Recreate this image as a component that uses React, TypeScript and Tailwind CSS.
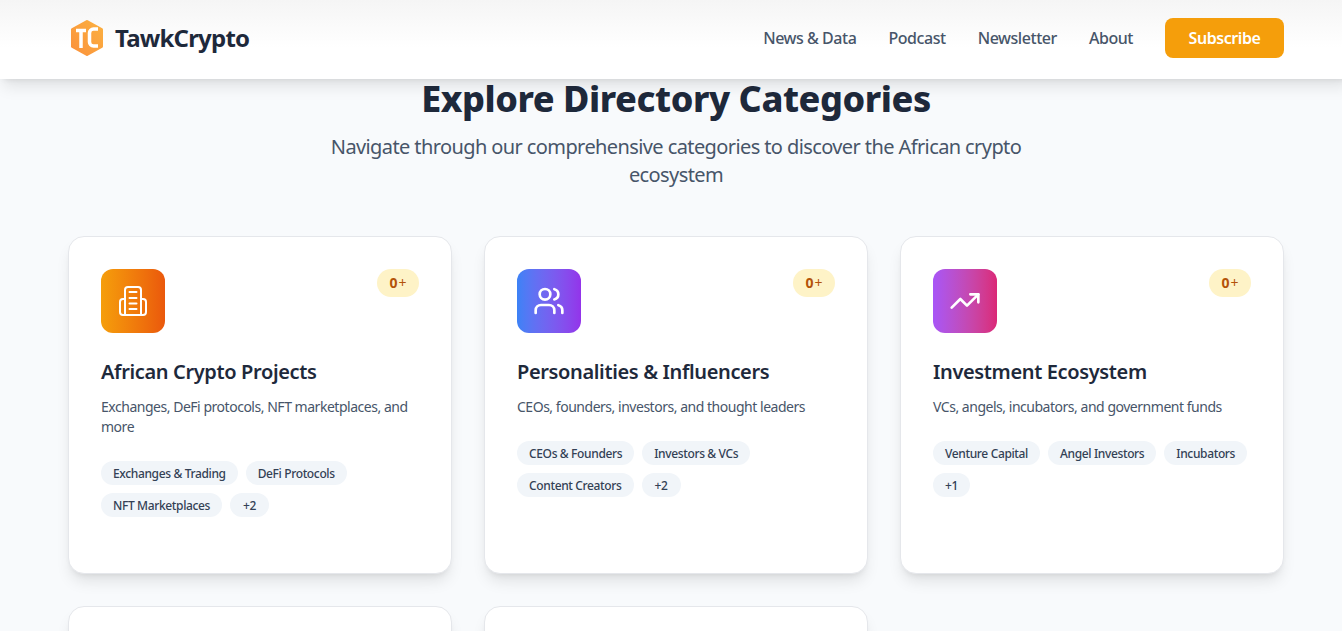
import { TrendingUp, Users } from "lucide-react";
import type { ReactNode } from "react";

type Category = {
  title: string;
  description: string;
  tags: string[];
  gradient: string;
  icon: ReactNode;
};

const BuildingIcon = () => (
  <svg width="32" height="32" viewBox="0 0 32 32" fill="none" stroke="white" strokeWidth="2" strokeLinecap="round" strokeLinejoin="round">
    <path d="M8 30V5a3 3 0 0 1 3-3h10a3 3 0 0 1 3 3v25" />
    <path d="M8 14H6a3 3 0 0 0-3 3v10a3 3 0 0 0 3 3h20a3 3 0 0 0 3-3V17a3 3 0 0 0-3-3h-2" />
    <path d="M12.500 7h7M12.500 13h7M12.500 18.500h7M12.500 24h7" />
  </svg>
);

const categories: Category[] = [
  {
    title: "African Crypto Projects",
    description: "Exchanges, DeFi protocols, NFT marketplaces, and more",
    tags: ["Exchanges & Trading", "DeFi Protocols", "NFT Marketplaces", "+2"],
    gradient: "bg-gradient-to-r from-[#f59e0b] to-[#ea580c]",
    icon: <BuildingIcon />,
  },
  {
    title: "Personalities & Influencers",
    description: "CEOs, founders, investors, and thought leaders",
    tags: ["CEOs & Founders", "Investors & VCs", "Content Creators", "+2"],
    gradient: "bg-gradient-to-r from-[#3b82f6] to-[#9333ea]",
    icon: <Users size={32} color="white" strokeWidth={2} />,
  },
  {
    title: "Investment Ecosystem",
    description: "VCs, angels, incubators, and government funds",
    tags: ["Venture Capital", "Angel Investors", "Incubators", "+1"],
    gradient: "bg-gradient-to-r from-[#a855f7] to-[#db2777]",
    icon: <TrendingUp size={32} color="white" strokeWidth={2} />,
  },
];

function Logo() {
  return (
    <svg width="34" height="38" viewBox="0 0 34 38">
      <defs>
        <linearGradient id="logoFill" x1="0" y1="1" x2="1" y2="0">
          <stop offset="0" stopColor="#fb923c" />
          <stop offset="1" stopColor="#fbb040" />
        </linearGradient>
      </defs>
      <path d="M17 2.500 31.500 10.500V27.500L17 35.500 2.500 27.500V10.500Z" fill="url(#logoFill)" stroke="url(#logoFill)" strokeWidth="3" strokeLinejoin="round" />
      <path d="M6 11.500H16M11 11.500V29" fill="none" stroke="white" strokeWidth="3.500" />
      <path d="M28 10H23.500A4 4 0 0 0 19.500 14V23A4 4 0 0 0 23.500 27H28" fill="none" stroke="white" strokeWidth="3.500" />
    </svg>
  );
}

function CategoryCard({ category }: { category: Category }) {
  return (
    <div className="h-[338px] rounded-2xl border border-[#e5e7eb] bg-white p-8 shadow-lg">
      <div className="flex items-start justify-between">
        <div className={`flex h-16 w-16 items-center justify-center rounded-xl ${category.gradient}`}>
          {category.icon}
        </div>
        <span className="flex h-7 w-[42px] items-center justify-center rounded-full bg-[#fef3c7] text-sm text-[#b45309]">
          <b className="font-bold">0</b>
          <span className="ml-px">+</span>
        </span>
      </div>
      <h3 className="mt-[25px] text-xl leading-7 font-semibold tracking-[-0.018em] text-[#1e293b]">{category.title}</h3>
      <p className="mt-[11px] text-sm leading-5 tracking-[-0.034em] text-[#475569]">{category.description}</p>
      <div className="mt-6 flex flex-wrap gap-2">
        {category.tags.map((tag) => (
          <span
            key={tag}
            className={`flex h-6 items-center justify-center rounded-full bg-[#f1f5f9] px-3 pt-[2px] text-xs font-medium tracking-[-0.03em] text-[#334155] ${tag === "+2" ? "min-w-[39px]" : ""}`}
          >
            {tag}
          </span>
        ))}
      </div>
    </div>
  );
}

export default function App() {
  return (
    <div className="h-[631px] overflow-hidden bg-[#f8fafc] font-['Noto_Sans',sans-serif]">
      <div className="w-[1352px]">
        <header className="relative z-10 h-[79px] bg-gradient-to-b from-[#f5f5f5] to-white to-60% pb-1 shadow-lg">
          <div className="mx-auto flex h-full max-w-7xl items-center justify-between px-8">
            <div className="flex items-center gap-[11px] pl-[2px]">
              <Logo />
              <span className="text-2xl font-bold tracking-[-0.033em] text-[#1e293b]">TawkCrypto</span>
            </div>
            <nav className="flex items-center gap-8 font-medium tracking-[-0.028em] text-[#475569]">
              <a>News &amp; Data</a>
              <a>Podcast</a>
              <a>Newsletter</a>
              <a>About</a>
              <button className="h-10 w-[119px] rounded-lg bg-[#f59e0b] font-semibold text-white">Subscribe</button>
            </nav>
          </div>
        </header>
        <main className="mx-auto max-w-7xl px-8">
          <div className="text-center">
            <h2 className="text-4xl leading-10 font-extrabold tracking-[-0.012em] text-[#1e293b]">Explore Directory Categories</h2>
            <p className="mx-auto mt-[14px] max-w-3xl text-xl leading-7 tracking-[-0.03em] text-[#475569]">
              Navigate through our comprehensive categories to discover the African crypto ecosystem
            </p>
          </div>
          <div className="mt-[47px] grid grid-cols-3 gap-8">
            {categories.map((category) => (
              <CategoryCard key={category.title} category={category} />
            ))}
            <div className="h-[338px] rounded-2xl border border-[#e5e7eb] bg-white shadow-lg" />
            <div className="h-[338px] rounded-2xl border border-[#e5e7eb] bg-white shadow-lg" />
          </div>
        </main>
      </div>
    </div>
  );
}
